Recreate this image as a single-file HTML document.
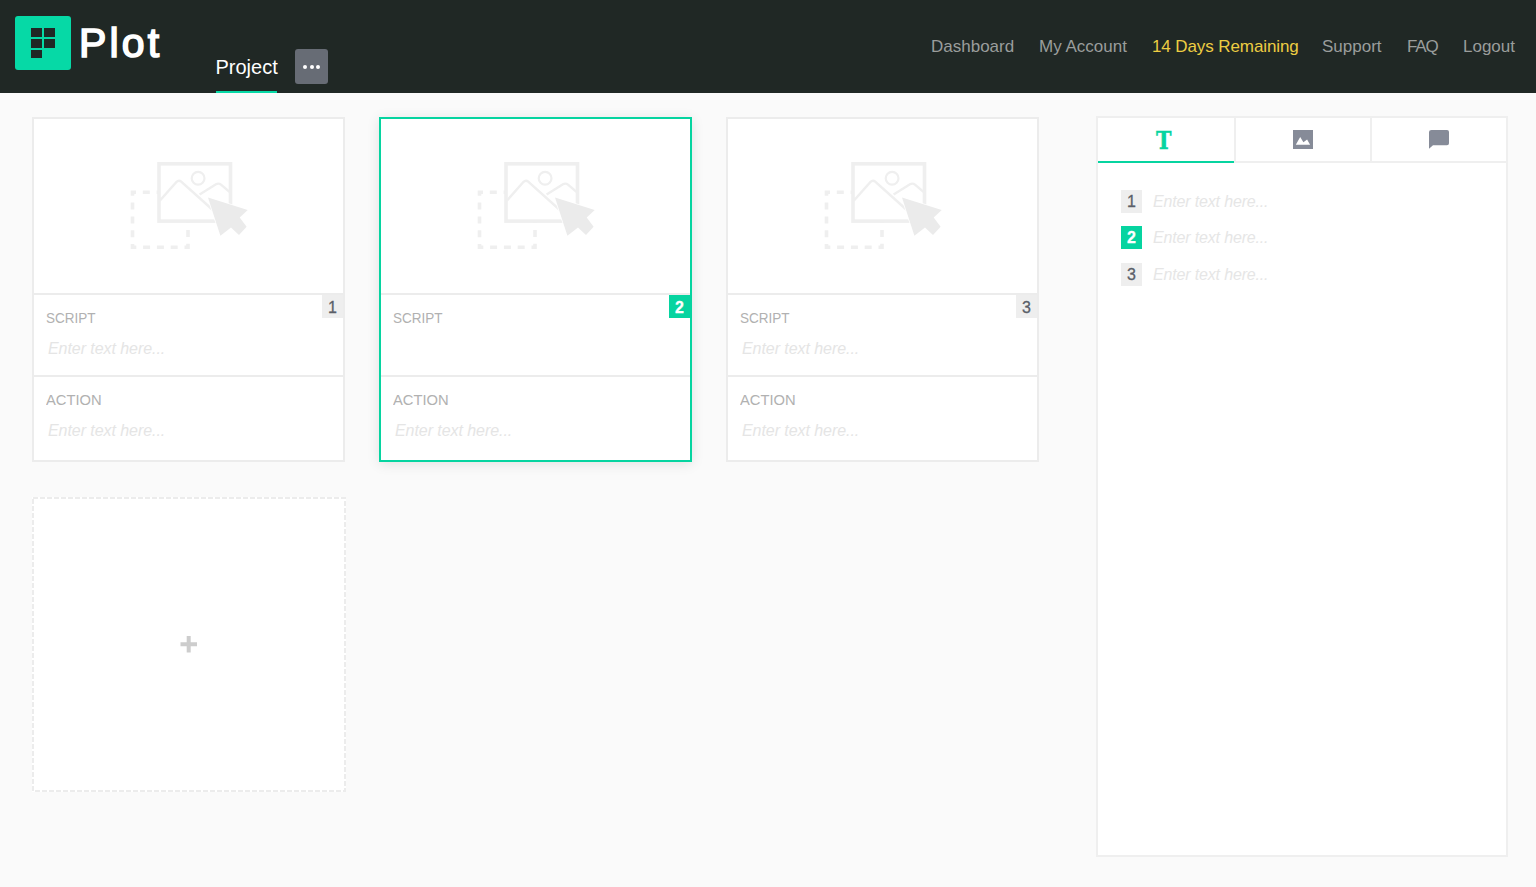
<!DOCTYPE html>
<html lang="en">
<head>
<meta charset="utf-8">
<title>Plot</title>
<style>
*{box-sizing:border-box;margin:0;padding:0}
html,body{width:1536px;height:887px;overflow:hidden;background:#fafafa;font-family:"Liberation Sans",sans-serif;}
.abs{position:absolute}
.t{position:absolute;white-space:nowrap;line-height:1;transform-origin:0 50%}
#hdr{position:absolute;left:0;top:0;width:1536px;height:93px;background:#202825}
#logo{position:absolute;left:15px;top:16px;width:56px;height:54px;background:#06d9a6;border-radius:3px}
#logo i{position:absolute;background:#202825;width:11px;height:8.4px}
#brand{left:79px;top:23px;font-size:41px;color:#fff;-webkit-text-stroke:1.6px #fff;letter-spacing:3.2px}
#proj{left:215.5px;top:57px;font-size:20px;color:#fff}
#projline{position:absolute;left:216px;top:90.5px;width:61px;height:2.5px;background:#06d9a6}
#more{position:absolute;left:295px;top:49px;width:33px;height:35px;background:#676c75;border-radius:3px}
#more i{position:absolute;top:16px;width:4px;height:4px;border-radius:50%;background:#fff}
.nav{font-size:17px;color:#9a9d9c;top:38px}
.nav.y{color:#edcd42}
.card{position:absolute;top:117px;width:313px;height:345px;background:#fff;border:2px solid #ececec}
.card.sel{border-color:#06d4a0;box-shadow:0 2px 12px rgba(0,0,0,.10)}
.card .sep{position:absolute;left:0;width:309px;height:2px;background:#ececec}
.card .lbl{font-size:15.5px;color:#b1b1b1;left:12px}
.lbl.s{transform:scaleX(.872)}
.lbl.a{transform:scaleX(.95)}
.card .ph{font-size:16px;font-style:italic;color:#e5e5e5;left:14px;letter-spacing:-.06px}
.card .num{position:absolute;left:288px;top:176px;width:21px;height:22.5px;background:#eee;color:#5a5f69;font-size:16px;line-height:25px;text-align:center;-webkit-text-stroke:.3px}
.card.sel .num{background:#06d4a0;color:#fff;font-weight:bold}
.card svg{position:absolute;left:86px;top:36px}
#add{position:absolute;left:32px;top:497px;width:314px;height:295px;background:#fff}
#panel{position:absolute;left:1096px;top:116px;width:411.5px;height:741px;background:#fff;border:2px solid #efefef}
#tabT{left:58px;top:11px;font-family:"DejaVu Serif","Liberation Serif",serif;font-weight:bold;font-size:24.5px;color:#06d4a0;-webkit-text-stroke:.4px #06d4a0;transform:scaleX(.85)}
.row{position:absolute;left:23px;height:23px;width:300px}
.row b{position:absolute;left:0;top:0;width:21px;height:23px;background:#eee;color:#5a5f69;font-size:16px;line-height:23px;text-align:center;font-weight:normal;-webkit-text-stroke:.3px}
.row.sel b{background:#06d4a0;color:#fff;font-weight:bold}
.row span{left:32px;top:4px;font-size:16px;font-style:italic;color:#e6e6e6;letter-spacing:-.16px}
</style>
</head>
<body>
<div id="hdr">
  <div id="logo">
    <i style="left:16px;top:12.2px"></i><i style="left:29px;top:12.2px"></i>
    <i style="left:16px;top:23.2px"></i><i style="left:29px;top:23.2px"></i>
    <i style="left:16px;top:34px"></i>
  </div>
  <div class="t" id="brand">Plot</div>
  <div class="t" id="proj">Project</div>
  <div id="projline"></div>
  <div id="more"><i style="left:8px"></i><i style="left:14.5px"></i><i style="left:21px"></i></div>
  <div class="t nav" style="left:931px">Dashboard</div>
  <div class="t nav" style="left:1039px">My Account</div>
  <div class="t nav y" style="left:1152px;letter-spacing:-.1px">14 Days Remaining</div>
  <div class="t nav" style="left:1322px">Support</div>
  <div class="t nav" style="left:1407px;letter-spacing:-1.2px">FAQ</div>
  <div class="t nav" style="left:1463px">Logout</div>
</div>
<div class="card" style="left:32px">
    <svg width="130" height="100" viewBox="120 155 130 100" fill="none" stroke="#efefef">
      <path d="M132.5 192.3H188V247.2H132.5Z" stroke-width="3.6" stroke-dasharray="7 6.8" stroke-dashoffset="3.5"/>
      <rect x="159" y="163.8" width="71.5" height="57.3" stroke-width="3.6" fill="#fff"/>
      <circle cx="198.1" cy="178.3" r="6.4" stroke-width="2.2"/>
      <path d="M160 200.5L176.6 181.8Q178.9 179.6 181.2 181.7L214 211" stroke-width="2.4" stroke-linejoin="round"/>
      <path d="M199.6 194.4L216 184.3Q218.6 182.8 221 184.6L229.5 191.8" stroke-width="2.4" stroke-linejoin="round"/>
      <path d="M208 197.6L247.7 210.1L239.7 217.6L246.6 226.8L239 235L231 227.5L220.4 235.7Z" fill="#ebebeb" stroke="#fff" stroke-width="1.6" paint-order="stroke"/>
    </svg>
    <div class="sep" style="top:174px"></div>
    <div class="num">1</div>
    <div class="t lbl s" style="top:190.5px">SCRIPT</div>
    <div class="t ph" style="top:222px">Enter text here...</div>
    <div class="sep" style="top:256px"></div>
    <div class="t lbl a" style="top:272.5px">ACTION</div>
    <div class="t ph" style="top:304px">Enter text here...</div>
</div>
<div class="card sel" style="left:379px">
    <svg width="130" height="100" viewBox="120 155 130 100" fill="none" stroke="#efefef">
      <path d="M132.5 192.3H188V247.2H132.5Z" stroke-width="3.6" stroke-dasharray="7 6.8" stroke-dashoffset="3.5"/>
      <rect x="159" y="163.8" width="71.5" height="57.3" stroke-width="3.6" fill="#fff"/>
      <circle cx="198.1" cy="178.3" r="6.4" stroke-width="2.2"/>
      <path d="M160 200.5L176.6 181.8Q178.9 179.6 181.2 181.7L214 211" stroke-width="2.4" stroke-linejoin="round"/>
      <path d="M199.6 194.4L216 184.3Q218.6 182.8 221 184.6L229.5 191.8" stroke-width="2.4" stroke-linejoin="round"/>
      <path d="M208 197.6L247.7 210.1L239.7 217.6L246.6 226.8L239 235L231 227.5L220.4 235.7Z" fill="#ebebeb" stroke="#fff" stroke-width="1.6" paint-order="stroke"/>
    </svg>
    <div class="sep" style="top:174px"></div>
    <div class="num">2</div>
    <div class="t lbl s" style="top:190.5px">SCRIPT</div>
    <div class="sep" style="top:256px"></div>
    <div class="t lbl a" style="top:272.5px">ACTION</div>
    <div class="t ph" style="top:304px">Enter text here...</div>
</div>
<div class="card" style="left:726px">
    <svg width="130" height="100" viewBox="120 155 130 100" fill="none" stroke="#efefef">
      <path d="M132.5 192.3H188V247.2H132.5Z" stroke-width="3.6" stroke-dasharray="7 6.8" stroke-dashoffset="3.5"/>
      <rect x="159" y="163.8" width="71.5" height="57.3" stroke-width="3.6" fill="#fff"/>
      <circle cx="198.1" cy="178.3" r="6.4" stroke-width="2.2"/>
      <path d="M160 200.5L176.6 181.8Q178.9 179.6 181.2 181.7L214 211" stroke-width="2.4" stroke-linejoin="round"/>
      <path d="M199.6 194.4L216 184.3Q218.6 182.8 221 184.6L229.5 191.8" stroke-width="2.4" stroke-linejoin="round"/>
      <path d="M208 197.6L247.7 210.1L239.7 217.6L246.6 226.8L239 235L231 227.5L220.4 235.7Z" fill="#ebebeb" stroke="#fff" stroke-width="1.6" paint-order="stroke"/>
    </svg>
    <div class="sep" style="top:174px"></div>
    <div class="num">3</div>
    <div class="t lbl s" style="top:190.5px">SCRIPT</div>
    <div class="t ph" style="top:222px">Enter text here...</div>
    <div class="sep" style="top:256px"></div>
    <div class="t lbl a" style="top:272.5px">ACTION</div>
    <div class="t ph" style="top:304px">Enter text here...</div>
</div>

<div id="add">
  <svg width="314" height="295" style="position:absolute;left:0;top:0">
    <rect x="1" y="1" width="312" height="293" fill="none" stroke="#ececec" stroke-width="2" stroke-dasharray="5 2"/>
    <path d="M148.5 147.3H165M156.7 139V155.6" stroke="#cdcdcd" stroke-width="4" stroke-linecap="butt" fill="none"/>
  </svg>
</div>

<div id="panel">
  <div class="abs" style="left:0;top:43px;width:408px;height:2px;background:#efefef"></div>
  <div class="abs" style="left:136px;top:0;width:2px;height:43px;background:#efefef"></div>
  <div class="abs" style="left:272px;top:0;width:2px;height:43px;background:#efefef"></div>
  <div class="abs" style="left:0;top:42.5px;width:136px;height:2.5px;background:#06d4a0"></div>
  <div class="t" id="tabT">T</div>
  <svg class="abs" style="left:195px;top:12px" width="20" height="19" viewBox="0 0 20 19"><rect width="20" height="19" fill="#868b98"/><path d="M2.8 14.7L7.2 7.1L10.4 12.3L14.1 9.5L17.1 14.7Z" fill="#fff"/></svg>
  <svg class="abs" style="left:331px;top:12px" width="21" height="19" viewBox="0 0 21 19"><path d="M2.5 0H18Q20 0 20 2V13.2Q20 15.2 18 15.2H4L0 18.8V2Q0 0 2.5 0Z" fill="#868b98"/></svg>
  <div class="row" style="top:72px"><b>1</b><span class="t">Enter text here...</span></div>
  <div class="row sel" style="top:108px"><b>2</b><span class="t">Enter text here...</span></div>
  <div class="row" style="top:145px"><b>3</b><span class="t">Enter text here...</span></div>
</div>

</body>
</html>
